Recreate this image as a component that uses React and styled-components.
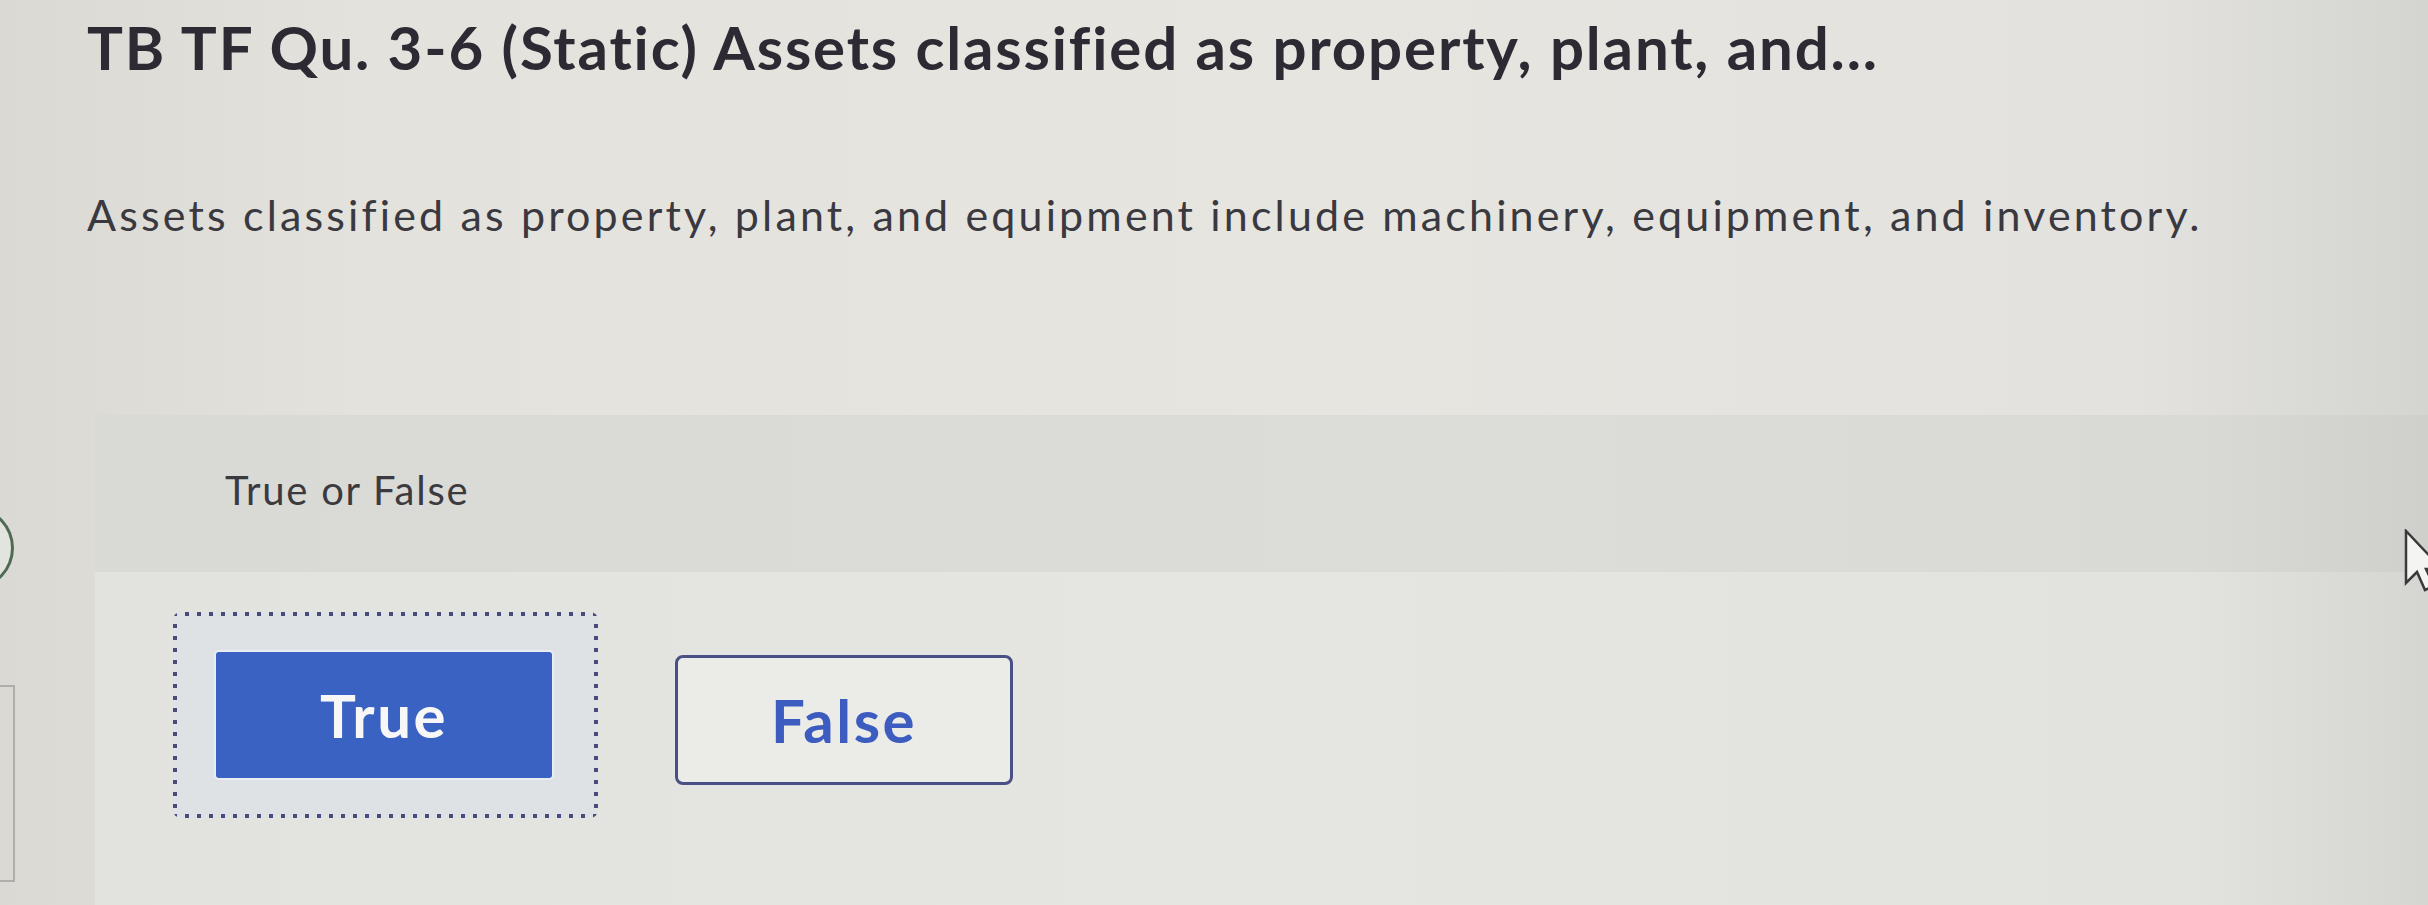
import React from "react";
import styled, { createGlobalStyle } from "styled-components";

const GlobalStyle = createGlobalStyle`
  html, body {
    margin: 0;
    padding: 0;
  }
  body {
    font-family: 'Lato', 'Liberation Sans', sans-serif;
    font-variant-ligatures: none;
    background: linear-gradient(to right, #dad9d4 0%, #e3e2dd 15%, #e6e5e0 55%, #e3e2de 88%, #d4d4d0 100%);
    overflow: hidden;
  }
`;

const Page = styled.div`
  position: relative;
  min-height: 905px;
  display: flex;
  flex-direction: column;
`;

const Header = styled.header`
  padding-left: 87px;
  height: 415px;
  box-sizing: border-box;
`;

const Title = styled.h1`
  margin: 11px 0 0;
  font-size: 60px;
  line-height: 72px;
  font-weight: 700;
  letter-spacing: 1.85px;
  color: #2e2a33;
  white-space: nowrap;
`;

const Prompt = styled.p`
  margin: 107px 0 0;
  font-size: 43px;
  line-height: 50px;
  font-weight: 400;
  letter-spacing: 3.15px;
  color: #3a393f;
  white-space: nowrap;
`;

const Panel = styled.section`
  flex: 1;
  margin-left: 95px;
  display: flex;
  flex-direction: column;
  background: linear-gradient(to right, #e2e2df 0%, #e5e5e2 50%, #e2e2df 90%, #d5d5d1 100%);
`;

const PanelHead = styled.div`
  height: 157px;
  box-sizing: border-box;
  padding: 52px 0 0 130px;
  background: linear-gradient(to right, #d9d9d6 0%, #dcdcd9 60%, #d9d9d6 90%, #cfcfcb 100%);
`;

const Label = styled.span`
  font-size: 40px;
  line-height: 47px;
  letter-spacing: 1.75px;
  color: #3b3a3f;
`;

const Choices = styled.div`
  display: flex;
  align-items: center;
  gap: 77px;
  padding: 40px 0 0 78px;
`;

const FocusRing = styled.div`
  padding: 38px 44px 38px 41px;
  border-radius: 8px;
  background:
    linear-gradient(to right, #474c7a 4px, transparent 4px) top left / 12px 4px repeat-x,
    linear-gradient(to right, #474c7a 4px, transparent 4px) bottom left / 12px 4px repeat-x,
    linear-gradient(to bottom, #474c7a 4px, transparent 4px) top left / 4px 12px repeat-y,
    linear-gradient(to bottom, #474c7a 4px, transparent 4px) top right / 4px 12px repeat-y,
    #dfe2e4;
`;

const ChoiceButton = styled.button`
  width: ${(p) => (p.$selected ? "340px" : "338px")};
  height: 130px;
  margin-top: ${(p) => (p.$selected ? "0" : "10px")};
  box-sizing: border-box;
  border-radius: ${(p) => (p.$selected ? "5px" : "8px")};
  border: ${(p) => (p.$selected ? "2px solid #e9edf3" : "3px solid #4a4f86")};
  background: ${(p) => (p.$selected ? "#3a62c3" : "#ebebe8")};
  color: ${(p) => (p.$selected ? "#f7f7f7" : "#3c5cc0")};
  font-family: 'Lato', 'Liberation Sans', sans-serif;
  font-size: 60px;
  font-weight: 700;
  letter-spacing: 2.5px;
  cursor: pointer;
  padding: 0;
`;

const EdgeCircle = styled.div`
  position: absolute;
  left: -62px;
  top: 508px;
  width: 70px;
  height: 74px;
  border-radius: 50%;
  border: 3px solid #4f6a52;
  background: #e2e4de;
`;

const EdgeCard = styled.div`
  position: absolute;
  left: -4px;
  top: 685px;
  width: 17px;
  height: 193px;
  border: 2px solid #aeaeaa;
  border-left: none;
`;

const Pointer = styled.svg`
  position: absolute;
  left: 2404px;
  top: 529px;
`;

export default function App() {
  return (
    <>
      <GlobalStyle />
      <Page>
        <Header>
          <Title>TB TF Qu. 3-6 (Static) Assets classified as property, plant, and...</Title>
          <Prompt>
            Assets classified as property, plant, and equipment include machinery, equipment, and inventory.
          </Prompt>
        </Header>
        <Panel>
          <PanelHead>
            <Label>True or False</Label>
          </PanelHead>
          <Choices>
            <FocusRing>
              <ChoiceButton $selected>True</ChoiceButton>
            </FocusRing>
            <ChoiceButton>False</ChoiceButton>
          </Choices>
        </Panel>
        <EdgeCircle />
        <EdgeCard />
        <Pointer width="40" height="64" viewBox="0 0 40 64">
          <path
            d="M2 2 L2 54 L13 43 L21 61 L30 57 L22 40 L38 40 Z"
            fill="#f4f4f2"
            stroke="#3a3a3a"
            strokeWidth="2.5"
            strokeLinejoin="miter"
          />
        </Pointer>
      </Page>
    </>
  );
}
